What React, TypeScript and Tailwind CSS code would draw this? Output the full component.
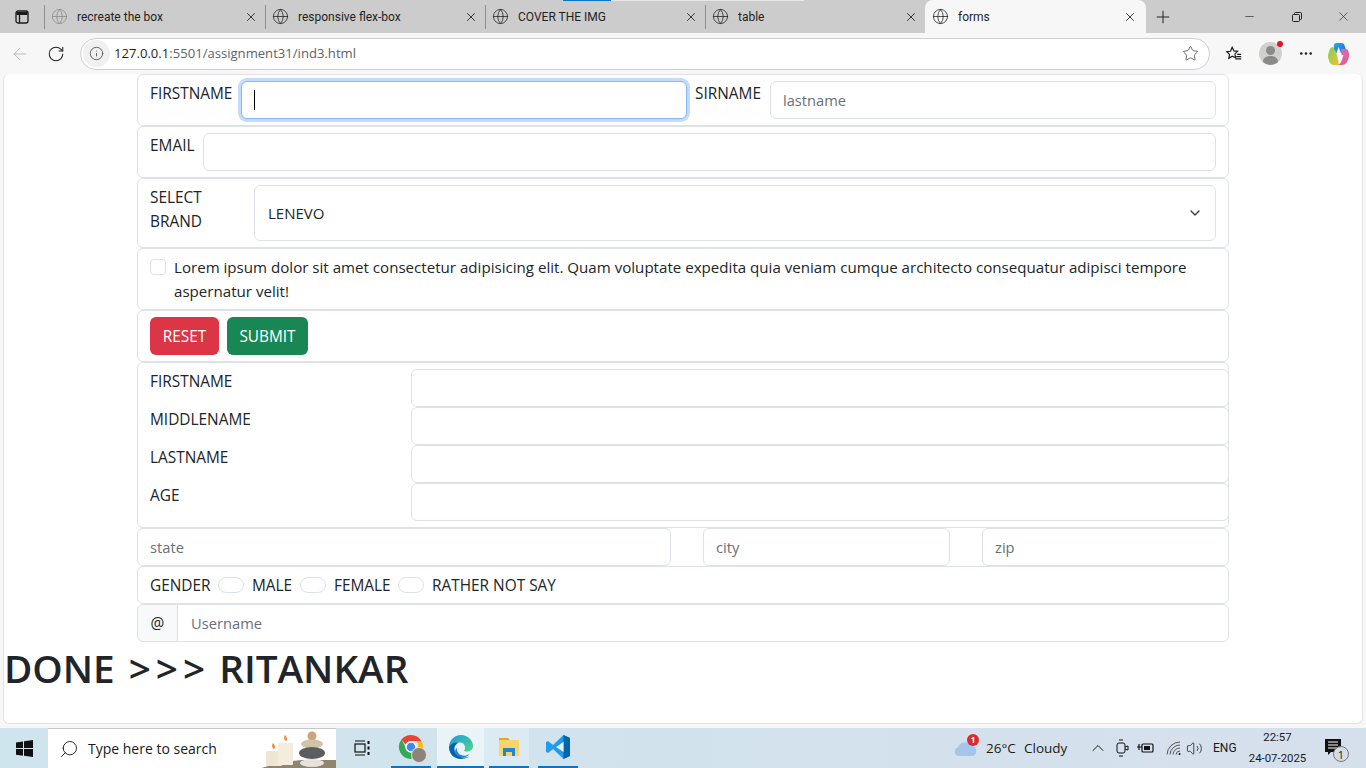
import React from 'react'
import { ArrowLeft, ChevronDown, ChevronUp, Globe, Info, Minus, MoreHorizontal, Plus, RotateCw, Search, Star, Volume2, X } from 'lucide-react'

const tabs = ['recreate the box', 'responsive flex-box', 'COVER THE IMG', 'table']
const font = { fontFamily: '"Open Sans", "Noto Sans", sans-serif' }
const roboto = { fontFamily: 'Roboto, "Open Sans", sans-serif' }

function Tab({ title, active, first }: { title: string; active?: boolean; first?: boolean }) {
  let cls = 'flex h-[33px] w-[220px] items-center pr-[7px]'
  if (first) cls = 'flex h-[33px] w-[221px] items-center pr-[7px]'
  if (active) cls = 'flex h-[33px] w-[221px] items-center rounded-t-lg bg-[#f7f7f7] pl-[7px] pr-[9px]'
  return (
    <div className={cls}>
      {!active && <span className="mr-[6px] h-[24px] w-px shrink-0 bg-[#8e8e8e]" />}
      <Globe size={17} strokeWidth={1.1} className={first ? 'shrink-0 text-[#8a8a8a]' : 'shrink-0 text-[#222]'} />
      <span className="ml-[9px] flex-1 truncate text-[12px] text-[#1f1f1f]" style={roboto}>{title}</span>
      <X size={14} strokeWidth={1.5} className="shrink-0 text-[#222]" />
    </div>
  )
}

function TabBar() {
  return (
    <div className="relative flex h-[33px] items-center bg-[#cccccc]">
      <div className="absolute left-[563px] top-0 h-[1px] w-[48px] bg-[#0b74d1]" />
      <div className="absolute left-[611px] top-0 h-[1px] w-[193px] bg-[#e6e6e6]" />
      <div className="flex w-[44px] shrink-0 justify-center">
        <svg width="16" height="16" viewBox="0 0 16 16" fill="none" stroke="#1a1a1a" strokeWidth="1.3">
          <rect x="2" y="2" width="12" height="12" rx="2" />
          <path d="M2.5 4.5h11" strokeWidth="3" />
          <path d="M5.5 5v9" />
        </svg>
      </div>
      {tabs.map((t, i) => (
        <Tab key={t} title={t} first={i === 0} />
      ))}
      <Tab title="forms" active />
      <Plus size={20} strokeWidth={1.2} className="ml-[7px] text-[#222]" />
      <div className="ml-auto flex items-center text-[#222]">
        <div className="flex w-[47px] justify-center"><Minus size={13} strokeWidth={1.2} /></div>
        <div className="flex w-[47px] justify-center">
          <svg width="12" height="12" viewBox="0 0 12 12" fill="none" stroke="#222" strokeWidth="1">
            <rect x="1.5" y="3.5" width="7" height="7" rx="1" />
            <path d="M3.5 3.5V2.5a1 1 0 0 1 1-1h5a1 1 0 0 1 1 1v5a1 1 0 0 1-1 1h-1" />
          </svg>
        </div>
        <div className="flex w-[46px] justify-center"><X size={15} strokeWidth={1} /></div>
      </div>
    </div>
  )
}

function Copilot() {
  return (
    <svg width="24" height="26" viewBox="0 0 24 26">
      <defs>
        <linearGradient id="cpa" x1="0" y1="0" x2="1" y2="1">
          <stop offset="0" stopColor="#25b0e8" />
          <stop offset="1" stopColor="#2a5fdc" />
        </linearGradient>
        <linearGradient id="cpb" x1="0" y1="0" x2="1" y2="1">
          <stop offset="0" stopColor="#7fcf5a" />
          <stop offset="1" stopColor="#f2c230" />
        </linearGradient>
        <linearGradient id="cpc" x1="0" y1="0" x2="1" y2="1">
          <stop offset="0" stopColor="#c273ea" />
          <stop offset="1" stopColor="#f6586b" />
        </linearGradient>
      </defs>
      <path d="M9 2h6c1.300 0 2 .8 2.400 2l2.600 8h-6L11.500 6 9.500 12H6l1-8c.2-1.200 1-2 2-2z" fill="url(#cpa)" />
      <path d="M1 16c0-3 1-5.500 2-8 .5-1.200 1.500-2 3-2l3 5 2 7 1 6H7c-2.500 0-4-1.500-5-4z" fill="url(#cpb)" />
      <path d="M14 8h5c1.500 0 2 1 2.500 2.500.8 2.500.8 5-.2 7.500-1 3-3 6-6.300 6H10c2 0 3.500-1.500 4.500-4l2-6h-2z" fill="url(#cpc)" />
    </svg>
  )
}

function Toolbar() {
  return (
    <div className="flex h-[41px] items-center bg-[#f7f7f7]">
      <div className="flex w-[38px] justify-center pl-[2px]"><ArrowLeft size={20} strokeWidth={1.1} className="text-[#b5b5b5]" /></div>
      <div className="flex w-[36px] justify-center"><RotateCw size={18} strokeWidth={1.4} className="text-[#222]" /></div>
      <div className="ml-[6px] flex h-[32px] w-[1130px] items-center rounded-full border border-[#cfcfcf] bg-white">
        <div className="ml-[2px] flex h-[27px] w-[27px] items-center justify-center rounded-full bg-[#f0f0f0]">
          <Info size={15} strokeWidth={1.5} className="text-[#5c5c5c]" />
        </div>
        <span className="ml-[4px] pt-[1px] text-[13.1px] text-[#5f6368]"><span className="text-[#1f1f1f]">127.0.0.1</span>:5501/assignment31/ind3.html</span>
        <Star size={17} strokeWidth={1} className="ml-auto mr-[10px] text-[#333]" />
      </div>
      <div className="ml-[15px] flex w-[18px] justify-center">
        <svg width="20" height="20" viewBox="0 0 20 20" fill="none" stroke="#1a1a1a" strokeWidth="1.300">
          <path d="M8 2.500l1.900 4 4.100.5-3 2.900.8 4.300L8 12.400l-3.800 2.300.8-4.300L2 7.500l4.100-.5z" />
          <path d="M13.500 10.500H18M12.500 13H18M11.500 15.500H18" />
        </svg>
      </div>
      <div className="relative ml-[16px] flex h-[23px] w-[23px] items-end justify-center overflow-visible rounded-full bg-[#d0d0cc]">
        <svg width="23" height="23" viewBox="0 0 23 23" fill="#8a8a88">
          <circle cx="11.500" cy="8.500" r="4.500" />
          <path d="M4 20c0-4 3-6 7.500-6s7.500 2 7.500 6a11 11 0 0 1-15 0z" />
        </svg>
        <span className="absolute right-[-1px] top-[-1px] h-[6px] w-[6px] rounded-full bg-[#e81123]" />
      </div>
      <div className="ml-[16px] flex w-[16px] justify-center"><MoreHorizontal size={17} className="text-[#222]" /></div>
      <div className="ml-[13px]"><Copilot /></div>
    </div>
  )
}

const inputCls = 'h-[38px] rounded-[6px] border border-[#dee2e6] bg-white px-[12px] text-[14.7px] text-[#212529] placeholder:text-[#6c7076] outline-none'
const rowCls = 'border border-[#dee2e6] rounded-[6px] px-[12px]'

function FormArea() {
  return (
    <div className="ml-[133px] w-[1092px] text-[15.4px] leading-[24px] text-[#212529]">
      <div className={`${rowCls} flex h-[52px] items-start gap-[8px] py-[6px]`}>
        <label className="w-[83px] shrink-0 whitespace-nowrap pt-[1px]">FIRSTNAME</label>
        <div className="relative h-[38px] w-[446px] shrink-0 rounded-[6px] border border-[#86b7fe] bg-white shadow-[0_0_0_3px_#c2dbfe]">
          <span className="absolute left-[12px] top-[8px] h-[20px] w-px bg-black" />
        </div>
        <label className="w-[67px] shrink-0 whitespace-nowrap pt-[1px]">SIRNAME</label>
        <input className={`${inputCls} min-w-0 flex-1`} placeholder="lastname" readOnly />
      </div>
      <div className={`${rowCls} flex h-[52px] items-start gap-[8px] py-[6px]`}>
        <label className="w-[45px] shrink-0 pt-[1px]">EMAIL</label>
        <input className={`${inputCls} min-w-0 flex-1`} readOnly />
      </div>
      <div className={`${rowCls} flex h-[70px] items-start py-[6px]`}>
        <label className="w-[104px] shrink-0 pt-[1px]">SELECT<br />BRAND</label>
        <div className="flex h-[56px] flex-1 items-center justify-between rounded-[6px] border border-[#dee2e6] pl-[13px] pr-[12px]">
          <span className="text-[15px]">LENEVO</span>
          <ChevronDown size={16} strokeWidth={2} className="text-[#343a40]" />
        </div>
      </div>
      <div className={`${rowCls} flex h-[62px] items-start py-[6px]`}>
        <span className="mt-[4px] h-[16px] w-[16px] shrink-0 rounded-[4px] border border-[#dee2e6] bg-white" />
        <p className="ml-[8px] text-[15.12px]">Lorem ipsum dolor sit amet consectetur adipisicing elit. Quam voluptate expedita quia veniam cumque architecto consequatur adipisci tempore aspernatur velit!</p>
      </div>
      <div className={`${rowCls} flex h-[52px] items-start gap-[8px] py-[6px]`}>
        <button className="h-[38px] w-[69px] rounded-[6px] bg-[#dc3545] pt-[1px] text-white">RESET</button>
        <button className="h-[38px] w-[81px] rounded-[6px] bg-[#198754] pt-[1px] text-white">SUBMIT</button>
      </div>
      <div className="flex h-[166px] flex-col rounded-[6px] border border-[#dee2e6] py-[6px] pl-[12px]">
        {['FIRSTNAME', 'MIDDLENAME', 'LASTNAME', 'AGE'].map((l) => (
          <div key={l} className="flex h-[38px] items-start">
            <label className="w-[261px] shrink-0 pt-[1px]">{l}</label>
            <input className={`${inputCls} mr-[-1px] min-w-0 flex-1`} readOnly />
          </div>
        ))}
      </div>
      <div className="flex h-[38px] gap-[32px]">
        <input className={`${inputCls} w-[534px]`} placeholder="state" readOnly />
        <input className={`${inputCls} w-[247px]`} placeholder="city" readOnly />
        <input className={`${inputCls} w-[247px]`} placeholder="zip" readOnly />
      </div>
      <div className={`${rowCls} flex h-[38px] items-center`}>
        <span className="w-[60px] pt-[2px]">GENDER</span>
        <span className="ml-[8px] h-[16px] w-[26px] rounded-full border border-[#dee2e6]" />
        <span className="ml-[8px] w-[40px] pt-[2px]">MALE</span>
        <span className="ml-[8px] h-[16px] w-[26px] rounded-full border border-[#dee2e6]" />
        <span className="ml-[8px] w-[56px] pt-[2px]">FEMALE</span>
        <span className="ml-[8px] h-[16px] w-[26px] rounded-full border border-[#dee2e6]" />
        <span className="ml-[8px] pt-[2px]">RATHER NOT SAY</span>
      </div>
      <div className="flex h-[38px]">
        <span className="flex w-[41px] items-center justify-center rounded-l-[6px] border border-[#dee2e6] bg-[#f8f9fa] pt-[2px]">@</span>
        <input className={`${inputCls} ml-[-1px] min-w-0 flex-1 rounded-l-none pl-[13px]`} placeholder="Username" readOnly />
      </div>
    </div>
  )
}

function ChromeIcon() {
  return (
    <div className="relative h-[26px] w-[26px]">
      <svg width="26" height="26" viewBox="0 0 26 26">
        <path d="M13 1a12 12 0 0 1 10.400 6H13a6 6 0 0 0-5.500 3.500L3.500 5.600A12 12 0 0 1 13 1z" fill="#ea4335" />
        <path d="M23.400 7A12 12 0 0 1 13 25l5.200-9a6 6 0 0 0 0-9z" fill="#fbbc04" />
        <path d="M3.500 5.600L8 14a6 6 0 0 0 10.200 2L13 25A12 12 0 0 1 3.500 5.600z" fill="#34a853" />
        <circle cx="13" cy="13" r="5" fill="#4285f4" stroke="#fff" strokeWidth="1.500" />
      </svg>
      <span className="absolute bottom-[-2px] right-[-2px] h-[14px] w-[14px] rounded-full bg-[#8d8378] ring-1 ring-[#d8d8d8]" />
    </div>
  )
}

function Taskbar() {
  return (
    <div className="flex h-[40px] items-stretch bg-gradient-to-r from-[#cfe5ee] to-[#d6e0ec] text-[#1a1a1a]">
      <div className="flex w-[48px] items-center justify-center">
        <svg width="17" height="17" viewBox="0 0 17 17" fill="#111">
          <path d="M0 2.400 7 1.400v6.700H0zM8 1.200 17 0v8.100H8zM0 9h7v6.700l-7-1zM8 9h9v8l-9-1.200z" />
        </svg>
      </div>
      <div className="relative flex w-[288px] items-center overflow-hidden border-t border-[#c8c8c8] bg-white">
        <Search size={20} strokeWidth={1.1} className="ml-[11px] scale-x-[-1]" />
        <span className="ml-[9px] text-[14px]">Type here to search</span>
        <svg className="absolute right-0 top-0" width="84" height="40" viewBox="0 0 84 40">
          <path d="M6 40 30 33 50 31h34v9z" fill="#8f8571" />
          <rect x="14" y="22" width="16" height="15" rx="1" fill="#efe7d6" />
          <rect x="26" y="14" width="15" height="22" rx="1" fill="#f4eddd" />
          <path d="M21 14c-2 3 0 6 1 6s2-3-1-6zM33 6c-2 3 0 6 1 6s2-3-1-6z" fill="#ef8a36" />
          <circle cx="60" cy="7" r="4.500" fill="#c9a67c" />
          <ellipse cx="60" cy="15" rx="11" ry="4.500" fill="#cfc4aa" />
          <ellipse cx="60" cy="24" rx="13" ry="6" fill="#5b5d5e" />
          <ellipse cx="60" cy="34" rx="12" ry="4" fill="#e6e3dc" />
        </svg>
      </div>
      <div className="flex w-[55px] items-center justify-center pr-[4px]">
        <svg width="18" height="18" viewBox="0 0 18 18" fill="none" stroke="#111" strokeWidth="1.200">
          <path d="M2 2h10M2 16h10" />
          <rect x="2" y="5" width="10" height="8" />
          <path d="M15.500 2v3M15.500 7.500v3M15.500 13v3" strokeWidth="2" />
        </svg>
      </div>
      <div className="flex w-[40px] items-center justify-center border-b-[2px] border-[#0a74c9]"><ChromeIcon /></div>
      <div className="ml-[6px] flex w-[47px] items-center justify-center border-b-[2px] border-[#0a74c9] bg-[#e9f3f8]">
        <svg width="26" height="26" viewBox="0 0 26 26">
          <defs>
            <linearGradient id="edg" x1="0" y1="0" x2="1" y2="1">
              <stop offset="0" stopColor="#1f9cd8" />
              <stop offset="1" stopColor="#4fd58a" />
            </linearGradient>
          </defs>
          <path d="M1 13C1 6 6.500 1 13 1c6.500 0 12 5 12 11 0 4-3 5.500-6 5.500-2 0-3-.5-3-1 2-1.500 1.500-8-4-8-4 0-7.500 1-11 4.500z" fill="url(#edg)" />
          <path d="M1 13c2-4 6-5 9.500-4.500C7.500 10 6 13 6.500 16c.6 4.500 5.500 8 11 7.500 1.500-.1 3-.7 4-1.500-2.500 2.300-5.500 3-8.500 3C6 25 1 20 1 13z" fill="#0b5fb0" />
          <path d="M9 14c-1 5 4 8.500 9 7.500l3.500-1.500c-3 4-9 4.500-12.500 1.500-2.500-2-2.500-6 0-7.500z" fill="#1687d8" />
        </svg>
      </div>
      <div className="flex w-[45px] items-stretch bg-[#dcebf3] pl-[5px]">
        <div className="flex flex-1 items-center justify-center border-b-[2px] border-[#0a74c9]">
          <svg width="24" height="24" viewBox="0 0 24 24">
            <path d="M2 3h9l2 2H2z" fill="#e2a91f" />
            <rect x="2" y="5" width="20" height="16" fill="#f8d568" />
            <path d="M6 21v-8h12v8h-3v-4H9v4z" fill="#1f87d6" />
          </svg>
        </div>
      </div>
      <div className="ml-[9px] flex w-[40px] items-center justify-center border-b-[2px] border-[#0a74c9]">
        <svg width="26" height="26" viewBox="0 0 26 26">
          <path d="M18.500 1 25 4v18l-6.500 3L8 15l-5 4-2-1.200V8.200L3 7l5 4z" fill="#1f9cf0" />
          <path d="M18.500 8v10L11 13z" fill="#e3f1fb" />
          <path d="M18.500 1 25 4v18l-6.500 3z" fill="#0065a9" />
          <path d="M18.500 8v10L16 16V10z" fill="#e3f1fb" />
        </svg>
      </div>
      <div className="ml-auto flex items-center text-[13.5px]">
        <div className="relative w-[24px]">
          <svg width="24" height="18" viewBox="0 0 24 18">
            <path d="M5 17a4.500 4.500 0 0 1-1-8.800 7 7 0 0 1 12.500-1.700A5.500 5.500 0 0 1 19 17z" fill="#a4c6ea" />
          </svg>
          <span className="absolute right-[-1px] top-[-5px] flex h-[12px] w-[12px] items-center justify-center rounded-full bg-[#d32f2f] text-[8px] font-bold leading-none text-white">1</span>
        </div>
        <span className="ml-[8px] w-[38px] whitespace-nowrap">26°C</span>
        <span className="w-[43px] whitespace-nowrap">Cloudy</span>
        <ChevronUp size={20} strokeWidth={1.2} className="ml-[21px]" />
        <svg className="ml-[7px]" width="14" height="18" viewBox="0 0 14 18" fill="none" stroke="#111" strokeWidth="1">
          <rect x="2" y="4" width="8" height="10" rx="2" />
          <path d="M10 8l3-1v4l-3-1M4 1h4M4 17h4" />
        </svg>
        <svg className="ml-[8px]" width="18" height="14" viewBox="0 0 18 14" fill="none" stroke="#111" strokeWidth="1.200">
          <path d="M0 6h5M2 3v6" />
          <rect x="5" y="3" width="11" height="8" rx="1" />
          <rect x="7" y="5" width="6" height="4" fill="#111" stroke="none" />
        </svg>
        <svg className="ml-[11px]" width="16" height="16" viewBox="0 0 16 16" fill="none" stroke="#555" strokeWidth="1">
          <path d="M1 14.500A13 13 0 0 1 14 2M4 14.500A10 10 0 0 1 14 5M7 14.500A7 7 0 0 1 14 8M10 14.500A4 4 0 0 1 14 11" />
          <circle cx="13.500" cy="14" r="1" fill="#111" stroke="none" />
        </svg>
        <Volume2 size={17} strokeWidth={1.1} className="ml-[4px]" />
        <span className="ml-[10px] w-[24px] text-[12px]" style={roboto}>ENG</span>
        <div className="ml-[12px] flex w-[57px] flex-col items-center whitespace-nowrap text-[11.4px] leading-[21px]" style={roboto}>
          <span>22:57</span>
          <span>24-07-2025</span>
        </div>
        <div className="relative ml-[19px] mr-[25px] h-[18px] w-[16px]">
          <svg width="16" height="17" viewBox="0 0 16 17" fill="#111">
            <path d="M0 0h16v13H6l-3 3v-3H0z" />
            <path d="M3 3h10M3 6h10M3 9h10" stroke="#fff" strokeWidth="1" />
          </svg>
          <span className="absolute bottom-[-5px] right-[-8px] flex h-[16px] w-[16px] items-center justify-center rounded-full border border-[#777] bg-[#d4dde4] text-[11px] leading-none">1</span>
        </div>
      </div>
    </div>
  )
}

export default function App() {
  return (
    <div className="flex h-screen w-full flex-col overflow-hidden bg-[#f7f7f7]" style={font}>
      <TabBar />
      <Toolbar />
      <div className="mx-[3px] h-[650px] rounded-[6px] border-b border-x border-[#e3e3e3] bg-white">
        <FormArea />
        <h1 className="text-[38.7px] font-semibold leading-[52px] text-[#212529] [word-spacing:4px]">
          DONE <span className="mr-[-5px] inline-block tracking-[5px]">&gt;&gt;&gt;</span> RITANKAR
        </h1>
      </div>
      <div className="mt-auto">
        <Taskbar />
      </div>
    </div>
  )
}
